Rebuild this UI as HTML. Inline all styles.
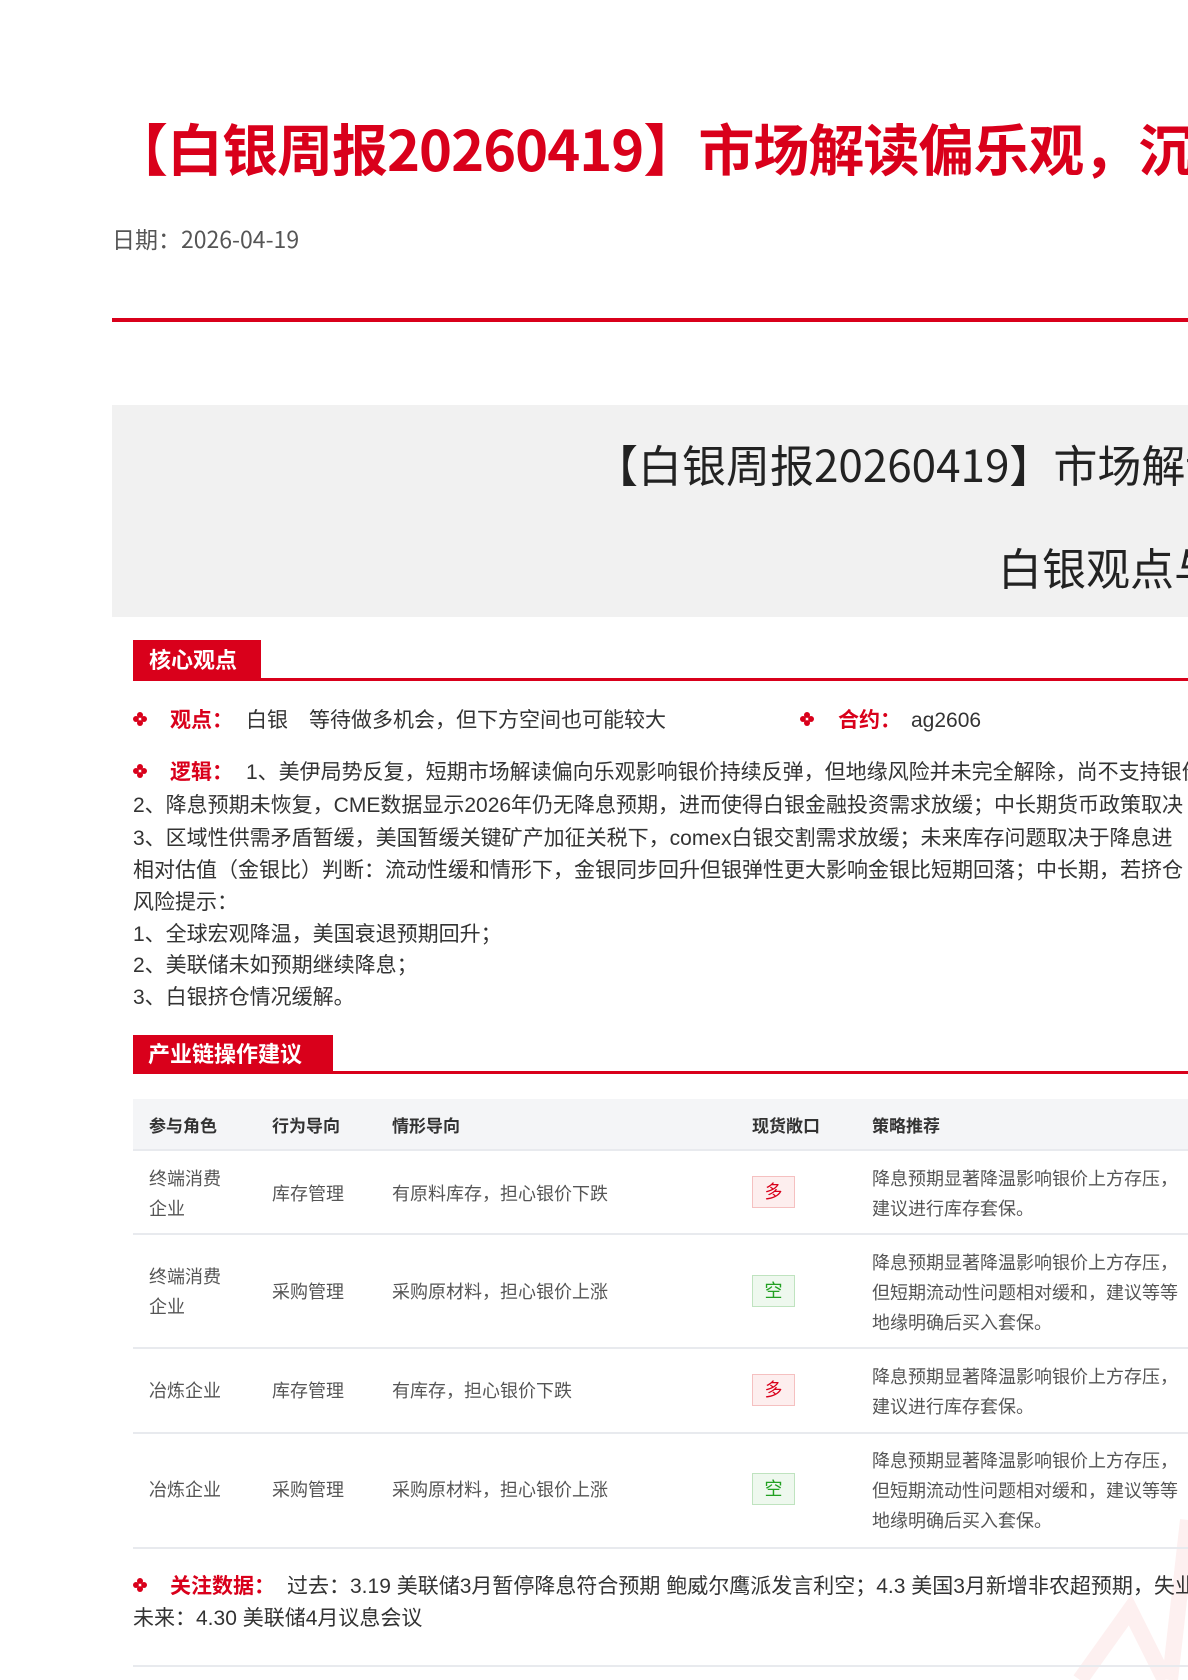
<!DOCTYPE html>
<html><head><meta charset="utf-8">
<style>
*{margin:0;padding:0;box-sizing:border-box}
html,body{width:1188px;height:1680px;overflow:hidden;background:#fff}
body{position:relative;font-family:"Liberation Sans","Noto Sans CJK SC",sans-serif;color:#333}
.a{position:absolute;white-space:nowrap}
.red{color:#d9001b}
.bul{position:absolute;width:14px;height:14px}
.lbl{color:#d9001b;font-weight:bold}
.t{font-size:21px;line-height:32px}
.th{font-size:17px;font-weight:bold;color:#333}
.td{font-size:18px;color:#555}
.badge{position:absolute;left:752px;width:43px;height:32px;font-size:18px;text-align:center;line-height:30px;border:1px solid}
.duo{background:#fdeeee;border-color:#f5c0c0;color:#d9001b}
.kong{background:#eef8ee;border-color:#bfe3bf;color:#22a022}
.rl{position:absolute;left:133px;right:0;height:2px;background:#e8eaee}
.clip{position:absolute;left:0;top:0;width:1188px;height:1680px;overflow:hidden}
</style></head><body><div class="clip">
<svg style="position:absolute;left:1000px;top:1500px" width="188" height="180"><path d="M188 20 L170 180 M80 180 L130 110 L165 180" stroke="#fdf0f0" stroke-width="16" fill="none"/></svg>
<div class="a red" style="left:112px;top:110px;font-family:'Noto Sans CJK SC',sans-serif;font-size:56px;font-weight:bold;line-height:76px;letter-spacing:-1px">【白银周报20260419】市场解读偏乐观，沉着应对等待机会</div>
<div class="a" style="left:112px;top:222px;font-family:'Noto Sans CJK SC',sans-serif;font-size:23px;color:#555;line-height:32px">日期：2026-04-19</div>
<div style="position:absolute;left:112px;width:1076px;top:318px;height:4px;background:#d9001b"></div>
<div style="position:absolute;left:112px;width:1076px;top:405px;height:212px;background:#f1f1f1"></div>
<div class="a" style="left:594px;top:434px;font-family:'Noto Sans CJK SC',sans-serif;font-size:44px;line-height:58px;color:#222">【白银周报20260419】市场解读偏乐观</div>
<div class="a" style="left:998px;top:542px;font-size:44px;line-height:58px;color:#222">白银观点与策略</div>

<div style="position:absolute;left:133px;top:640px;width:128px;height:40px;background:#d9001b;color:#fff;font-size:22px;font-weight:bold;line-height:42px;padding-left:16px">核心观点</div>
<div style="position:absolute;left:133px;width:1055px;top:678px;height:3px;background:#d9001b"></div>

<svg class="bul" style="left:133px;top:712px" viewBox="0 0 14 14"><g fill="#d9001b"><circle cx="7" cy="3" r="3"/><circle cx="7" cy="11" r="3"/><circle cx="3" cy="7" r="3"/><circle cx="11" cy="7" r="3"/></g><circle cx="7" cy="7" r="1.3" fill="#fff"/></svg>
<div class="a t" style="left:170px;top:705px"><span class="lbl">观点：</span></div>
<div class="a t" style="left:246px;top:705px">白银　等待做多机会，但下方空间也可能较大</div>
<svg class="bul" style="left:800px;top:712px" viewBox="0 0 14 14"><g fill="#d9001b"><circle cx="7" cy="3" r="3"/><circle cx="7" cy="11" r="3"/><circle cx="3" cy="7" r="3"/><circle cx="11" cy="7" r="3"/></g><circle cx="7" cy="7" r="1.3" fill="#fff"/></svg>
<div class="a t" style="left:838px;top:705px"><span class="lbl">合约：</span></div>
<div class="a t" style="left:911px;top:705px">ag2606</div>

<svg class="bul" style="left:133px;top:764px" viewBox="0 0 14 14"><g fill="#d9001b"><circle cx="7" cy="3" r="3"/><circle cx="7" cy="11" r="3"/><circle cx="3" cy="7" r="3"/><circle cx="11" cy="7" r="3"/></g><circle cx="7" cy="7" r="1.3" fill="#fff"/></svg>
<div class="a t" style="left:170px;top:757px"><span class="lbl">逻辑：</span></div>
<div class="a t" style="left:246px;top:757px">1、美伊局势反复，短期市场解读偏向乐观影响银价持续反弹，但地缘风险并未完全解除，尚不支持银价</div>
<div class="a t" style="left:133px;top:790px">2、降息预期未恢复，CME数据显示2026年仍无降息预期，进而使得白银金融投资需求放缓；中长期货币政策取决</div>
<div class="a t" style="left:133px;top:823px">3、区域性供需矛盾暂缓，美国暂缓关键矿产加征关税下，comex白银交割需求放缓；未来库存问题取决于降息进</div>
<div class="a t" style="left:133px;top:855px">相对估值（金银比）判断：流动性缓和情形下，金银同步回升但银弹性更大影响金银比短期回落；中长期，若挤仓</div>
<div class="a t" style="left:133px;top:887px">风险提示：</div>
<div class="a t" style="left:133px;top:919px">1、全球宏观降温，美国衰退预期回升；</div>
<div class="a t" style="left:133px;top:950px">2、美联储未如预期继续降息；</div>
<div class="a t" style="left:133px;top:982px">3、白银挤仓情况缓解。</div>

<div style="position:absolute;left:133px;top:1035px;width:200px;height:38px;background:#d9001b;color:#fff;font-size:22px;font-weight:bold;line-height:40px;padding-left:15px">产业链操作建议</div>
<div style="position:absolute;left:133px;width:1055px;top:1071px;height:3px;background:#d9001b"></div>

<div style="position:absolute;left:133px;width:1055px;top:1099px;height:51px;background:#f4f5f7"></div>
<div class="rl" style="top:1149px"></div>
<div class="a th" style="left:149px;top:1112px">参与角色</div>
<div class="a th" style="left:272px;top:1112px">行为导向</div>
<div class="a th" style="left:392px;top:1112px">情形导向</div>
<div class="a th" style="left:752px;top:1112px">现货敞口</div>
<div class="a th" style="left:872px;top:1112px">策略推荐</div>

<div class="a td" style="left:149px;top:1164px;line-height:30px">终端消费<br>企业</div>
<div class="a td" style="left:272px;top:1179px;line-height:30px">库存管理</div>
<div class="a td" style="left:392px;top:1179px;line-height:30px">有原料库存，担心银价下跌</div>
<div class="badge duo" style="top:1176px">多</div>
<div class="a td" style="left:872px;top:1164px;line-height:30px">降息预期显著降温影响银价上方存压，<br>建议进行库存套保。</div>
<div class="rl" style="top:1233px"></div>

<div class="a td" style="left:149px;top:1262px;line-height:30px">终端消费<br>企业</div>
<div class="a td" style="left:272px;top:1277px;line-height:30px">采购管理</div>
<div class="a td" style="left:392px;top:1277px;line-height:30px">采购原材料，担心银价上涨</div>
<div class="badge kong" style="top:1275px">空</div>
<div class="a td" style="left:872px;top:1248px;line-height:30px">降息预期显著降温影响银价上方存压，<br>但短期流动性问题相对缓和，建议等等<br>地缘明确后买入套保。</div>
<div class="rl" style="top:1347px"></div>

<div class="a td" style="left:149px;top:1376px;line-height:30px">冶炼企业</div>
<div class="a td" style="left:272px;top:1376px;line-height:30px">库存管理</div>
<div class="a td" style="left:392px;top:1376px;line-height:30px">有库存，担心银价下跌</div>
<div class="badge duo" style="top:1374px">多</div>
<div class="a td" style="left:872px;top:1362px;line-height:30px">降息预期显著降温影响银价上方存压，<br>建议进行库存套保。</div>
<div class="rl" style="top:1432px"></div>

<div class="a td" style="left:149px;top:1475px;line-height:30px">冶炼企业</div>
<div class="a td" style="left:272px;top:1475px;line-height:30px">采购管理</div>
<div class="a td" style="left:392px;top:1475px;line-height:30px">采购原材料，担心银价上涨</div>
<div class="badge kong" style="top:1473px">空</div>
<div class="a td" style="left:872px;top:1446px;line-height:30px">降息预期显著降温影响银价上方存压，<br>但短期流动性问题相对缓和，建议等等<br>地缘明确后买入套保。</div>
<div class="rl" style="top:1547px"></div>

<svg class="bul" style="left:133px;top:1578px" viewBox="0 0 14 14"><g fill="#d9001b"><circle cx="7" cy="3" r="3"/><circle cx="7" cy="11" r="3"/><circle cx="3" cy="7" r="3"/><circle cx="11" cy="7" r="3"/></g><circle cx="7" cy="7" r="1.3" fill="#fff"/></svg>
<div class="a t" style="left:170px;top:1571px"><span class="lbl">关注数据：</span></div>
<div class="a t" style="left:287px;top:1571px">过去：3.19 美联储3月暂停降息符合预期 鲍威尔鹰派发言利空；4.3 美国3月新增非农超预期，失业率</div>
<div class="a t" style="left:133px;top:1603px">未来：4.30 美联储4月议息会议</div>
<div class="rl" style="top:1665px"></div>
</div></body></html>
